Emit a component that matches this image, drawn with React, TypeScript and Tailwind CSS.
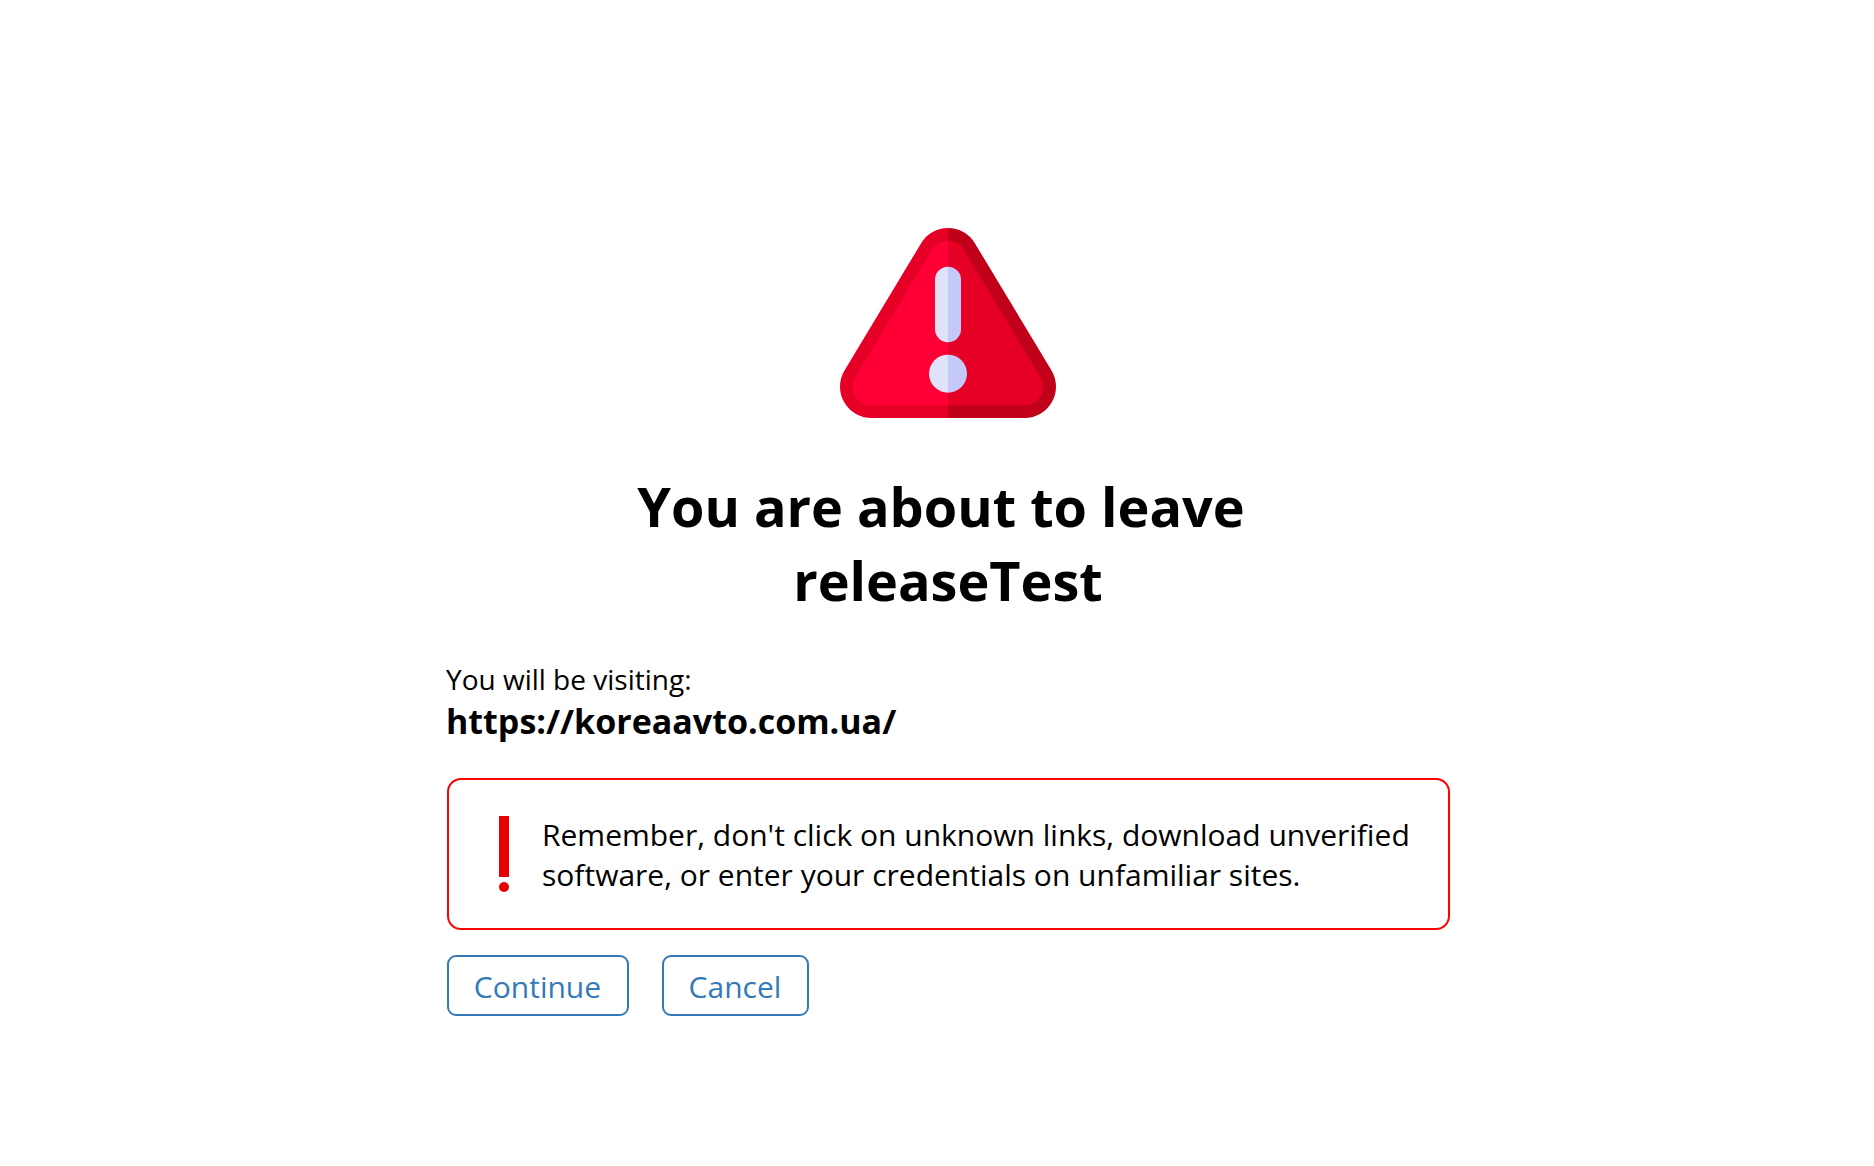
function WarningIcon() {
  return (
    <svg viewBox="0 0 648 570" className="mr-px h-[190px] w-[216px]">
      <path
        fill="#e60026"
        d="M324 0A94 94 0 0 0 243.5 45.5L13.5 427.5A94 94 0 0 0 94 570H324Z"
      />
      <path
        fill="#c1001a"
        d="M324 0A94 94 0 0 1 404.5 45.5L634.5 427.5A94 94 0 0 1 554 570H324Z"
      />
      <path
        fill="#ff0036"
        d="M324 38A55.5 55.5 0 0 0 276.4 65.4L46.4 447.4A55.5 55.5 0 0 0 94 531.5H324Z"
      />
      <path
        fill="#e60026"
        d="M324 38A55.5 55.5 0 0 1 371.6 65.4L601.6 447.4A55.5 55.5 0 0 1 554 531.5H324Z"
      />
      <path fill="#dfe3fa" d="M324 116a39 39 0 0 0-39 39v149a39 39 0 0 0 39 39Z" />
      <path fill="#c5c9f7" d="M324 116a39 39 0 0 1 39 39v149a39 39 0 0 1-39 39Z" />
      <path fill="#dfe3fa" d="M324 380a57 57 0 0 0 0 114Z" />
      <path fill="#c5c9f7" d="M324 380a57 57 0 0 1 0 114Z" />
    </svg>
  );
}

export default function App() {
  return (
    <div className="min-h-screen bg-white pt-[228px] pl-[447px] font-['Open_Sans',sans-serif] text-black">
      <div className="w-[1003px]">
        <div className="flex justify-center">
          <WarningIcon />
        </div>
        <h1 className="mt-[51px] mr-px text-center text-[54px] leading-[74px] font-bold">
          You are about to leave&nbsp;
          <br />
          releaseTest
        </h1>
        <p className="mt-[42px] -ml-px text-[28px] leading-[40px]">
          You will be visiting:
        </p>
        <p className="-ml-px text-[34px] leading-[44px] font-bold">
          https://koreaavto.com.ua/
        </p>
        <div className="mt-[35px] flex h-[152px] items-center rounded-[14px] border-2 border-[#ff0000] pl-[50px]">
          <svg viewBox="0 0 10 76" className="mr-[33px] h-[76px] w-[10px]">
            <rect width="10" height="61" fill="#e60000" />
            <circle cx="5" cy="71" r="5" fill="#e60000" />
          </svg>
          <p className="pt-0.5 text-[30px] leading-[40px] whitespace-nowrap">
            Remember, don't click on unknown links, download unverified
            <br />
            software, or enter your credentials on unfamiliar sites.
          </p>
        </div>
        <div className="mt-[25px] flex gap-[33px] text-[30px] text-[#337ab7]">
          <button className="h-[61px] w-[182px] rounded-[9px] border-2 border-[#337ab7] pt-0.5 pr-px">
            Continue
          </button>
          <button className="h-[61px] w-[147px] rounded-[9px] border-2 border-[#337ab7] pt-0.5 pr-px">
            Cancel
          </button>
        </div>
      </div>
    </div>
  );
}
